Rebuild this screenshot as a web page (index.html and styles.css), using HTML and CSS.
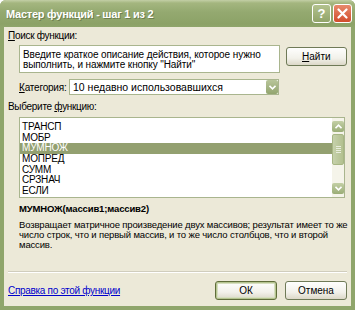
FILE: index.html
```html
<!DOCTYPE html>
<html lang="ru">
<head>
  <meta charset="UTF-8">
  <title>Мастер функций</title>
  <link rel="stylesheet" href="styles.css">
</head>
<body>
<div class="window">

  <!-- title bar -->
  <div class="title-bar">
    <span class="title-text">Мастер функций - шаг 1 из 2</span>
    <div class="title-buttons">
      <span class="tb-btn tb-help">?</span>
      <span class="tb-btn tb-close">
        <svg width="11" height="11" viewBox="0 0 11 11"><path d="M1.5 1.5 L9.5 9.5 M9.5 1.5 L1.5 9.5" stroke="#fff" stroke-width="2.2" stroke-linecap="round"/></svg>
      </span>
    </div>
  </div>

  <!-- dialog body -->
  <div class="content">
    <div class="label"><u>П</u>оиск функции:</div>

    <div class="search-row">
      <div class="search-box">Введите краткое описание действия, которое нужно<br>выполнить, и нажмите кнопку "Найти"</div>
      <button class="xp-button find-button" type="button"><u>Н</u>айти</button>
    </div>

    <div class="category-row">
      <span class="category-label"><u>К</u>атегория:</span>
      <div class="select">
        <span class="select-value">10 недавно использовавшихся</span>
        <span class="select-arrow">
          <svg width="7" height="5" viewBox="0 0 7 5"><path d="M0.5 0.8 L3.5 3.8 L6.5 0.8" fill="none" stroke="#fff" stroke-width="1.6"/></svg>
        </span>
      </div>
    </div>

    <div class="label list-label">Выберите <u>ф</u>ункцию:</div>

    <div class="func-list">
      <div class="items">
        <div class="item">ТРАНСП</div>
        <div class="item">МОБР</div>
        <div class="item selected">МУМНОЖ</div>
        <div class="item">МОПРЕД</div>
        <div class="item">СУММ</div>
        <div class="item">СРЗНАЧ</div>
        <div class="item">ЕСЛИ</div>
      </div>
      <div class="scrollbar">
        <span class="sb-btn">
          <svg width="7" height="5" viewBox="0 0 7 5"><path d="M0.5 4.2 L3.5 1.2 L6.5 4.2" fill="none" stroke="#fff" stroke-width="1.6"/></svg>
        </span>
        <span class="sb-track">
          <span class="sb-thumb"><span class="grip"></span></span>
        </span>
        <span class="sb-btn">
          <svg width="7" height="5" viewBox="0 0 7 5"><path d="M0.5 0.8 L3.5 3.8 L6.5 0.8" fill="none" stroke="#fff" stroke-width="1.6"/></svg>
        </span>
      </div>
    </div>

    <div class="func-name">МУМНОЖ(массив1;массив2)</div>
    <div class="func-desc">Возвращает матричное произведение двух массивов; результат имеет то же<br>число строк, что и первый массив, и то же число столбцов, что и второй<br>массив.</div>

    <div class="separator"></div>

    <div class="footer">
      <a class="help-link" href="#">Справка по этой функции</a>
      <div class="footer-buttons">
        <button class="xp-button default" type="button">ОК</button>
        <button class="xp-button" type="button">Отмена</button>
      </div>
    </div>
  </div>
</div>
</body>
</html>
```

FILE: styles.css
```css
body{
  margin: 0;
  font-family: 'Liberation Sans', Arial, sans-serif;
  font-size: 10px;
  color: #000;
}

.window{
  width: 355px;
  height: 310px;
  box-sizing: border-box;
  display: flex;
  flex-direction: column;
  background-color: #8fa56b;
  padding: 0 4px 4px 4px;
  border-radius: 6px 6px 0 0;
}

/* title bar */
.title-bar{
  height: 27px;
  margin: 0 -4px;
  padding: 0 3px 0 6px;
  display: flex;
  align-items: center;
  justify-content: space-between;
  background: linear-gradient(#c3cfa6 0, #a4b67f 3px, #94a970 12px, #8ca267 24px, #8fa56b 27px);
  border-radius: 6px 6px 0 0;
}

.title-text{
  font-weight: bold;
  font-size: 11px;
  letter-spacing: -0.25px;
  color: #fff;
  text-shadow: 1px 1px 0 #6d7f4e;
}

.title-buttons{
  display: flex;
  gap: 2px;
}

.tb-btn{
  width: 19px;
  height: 19px;
  box-sizing: border-box;
  border: 1px solid #fff;
  border-radius: 3px;
  display: flex;
  align-items: center;
  justify-content: center;
}

.tb-help{
  background: linear-gradient(#b3c28e, #91a46a);
  color: #fff;
  font-weight: bold;
  font-size: 13px;
}

.tb-close{
  background: linear-gradient(#e78a6c, #d24c2c);
}

/* body */
.content{
  flex: 1;
  background-color: #ece9d8;
  padding: 3px 4px 0 4px;
  display: flex;
  flex-direction: column;
}

.label{
  height: 12px;
  line-height: 12px;
  letter-spacing: -0.3px;
}

.list-label{
  margin-top: 6px;
}

.search-row{
  display: flex;
  margin: 3px 0 0 11px;
  height: 28px;
}

.search-box{
  width: 263px;
  box-sizing: border-box;
  border: 1px solid #a9b58e;
  background-color: #fff;
  padding: 4px 4px 0 3px;
  line-height: 10px;
  letter-spacing: -0.1px;
  white-space: nowrap;
}

.xp-button{
  width: 62px;
  height: 19px;
  box-sizing: border-box;
  border: 1px solid #6f7a57;
  border-radius: 3px;
  background: linear-gradient(#fefefd, #f2f1ea 60%, #dcd8c8);
  font-family: 'Liberation Sans', Arial, sans-serif;
  font-size: 10px;
  padding: 0;
  color: #000;
}

.find-button{
  margin: 2px 0 0 6px;
}

.category-row{
  display: flex;
  align-items: center;
  margin: 6px 0 0 11px;
  height: 16px;
}

.category-label{
  width: 50px;
  letter-spacing: -0.2px;
}

.select{
  width: 210px;
  height: 16px;
  box-sizing: border-box;
  border: 1px solid #a9b58e;
  background-color: #fff;
  display: flex;
  align-items: center;
  justify-content: space-between;
  padding-left: 3px;
  font-size: 10.5px;
}

.select-arrow{
  width: 12px;
  height: 14px;
  background: linear-gradient(#b8c59a, #93a56f);
  border-radius: 2px;
  display: flex;
  align-items: center;
  justify-content: center;
}

.func-list{
  margin: 4px 2px 0 11px;
  height: 81px;
  box-sizing: border-box;
  border: 1px solid #a9b58e;
  background-color: #fff;
  display: flex;
}

.items{
  flex: 1;
  padding-top: 4px;
  letter-spacing: -0.2px;
}

.item{
  height: 10.7px;
  line-height: 10.7px;
  padding-left: 2px;
}

.item.selected{
  background-color: #93a070;
  color: #fff;
}

.scrollbar{
  width: 12px;
  display: flex;
  flex-direction: column;
  background-color: #f5f4ea;
  padding: 3px 0 3px;
}

.sb-btn{
  height: 11px;
  background: linear-gradient(#c3cfa5, #9aad76);
  border-radius: 2px;
  display: flex;
  align-items: center;
  justify-content: center;
}

.sb-track{
  flex: 1;
  padding: 2px 0;
}

.sb-thumb{
  height: 31px;
  border-radius: 2px;
  background: linear-gradient(90deg, #c6d1ab, #b2c08f);
  border: 1px solid #a7b684;
  box-sizing: border-box;
  display: flex;
  align-items: center;
  justify-content: center;
}

.grip{
  width: 5px;
  height: 7px;
  background: repeating-linear-gradient(#e8eddc 0, #e8eddc 1px, transparent 1px, transparent 2px);
}

.func-name{
  font-weight: bold;
  font-size: 9.5px;
  letter-spacing: -0.15px;
  margin: 5px 0 0 11px;
  height: 12px;
  line-height: 12px;
}

.func-desc{
  margin: 5px 0 0 11px;
  font-size: 9.5px;
  letter-spacing: -0.15px;
  line-height: 10px;
  white-space: nowrap;
}

.separator{
  margin-top: auto;
  border-top: 1px solid #d0cdbd;
  border-bottom: 1px solid #fff;
  height: 0;
}

.footer{
  display: flex;
  justify-content: space-between;
  align-items: center;
  height: 33px;
  padding-top: 2px;
  box-sizing: border-box;
}

.help-link{
  color: #0000cc;
  text-decoration: underline;
  letter-spacing: -0.3px;
}

.footer-buttons{
  display: flex;
  gap: 8px;
}

.xp-button.default{
  border-color: #5f6d3a;
  box-shadow: inset 0 0 0 1px #b5c48f, inset 0 0 0 2px #d6dec0;
}
```
